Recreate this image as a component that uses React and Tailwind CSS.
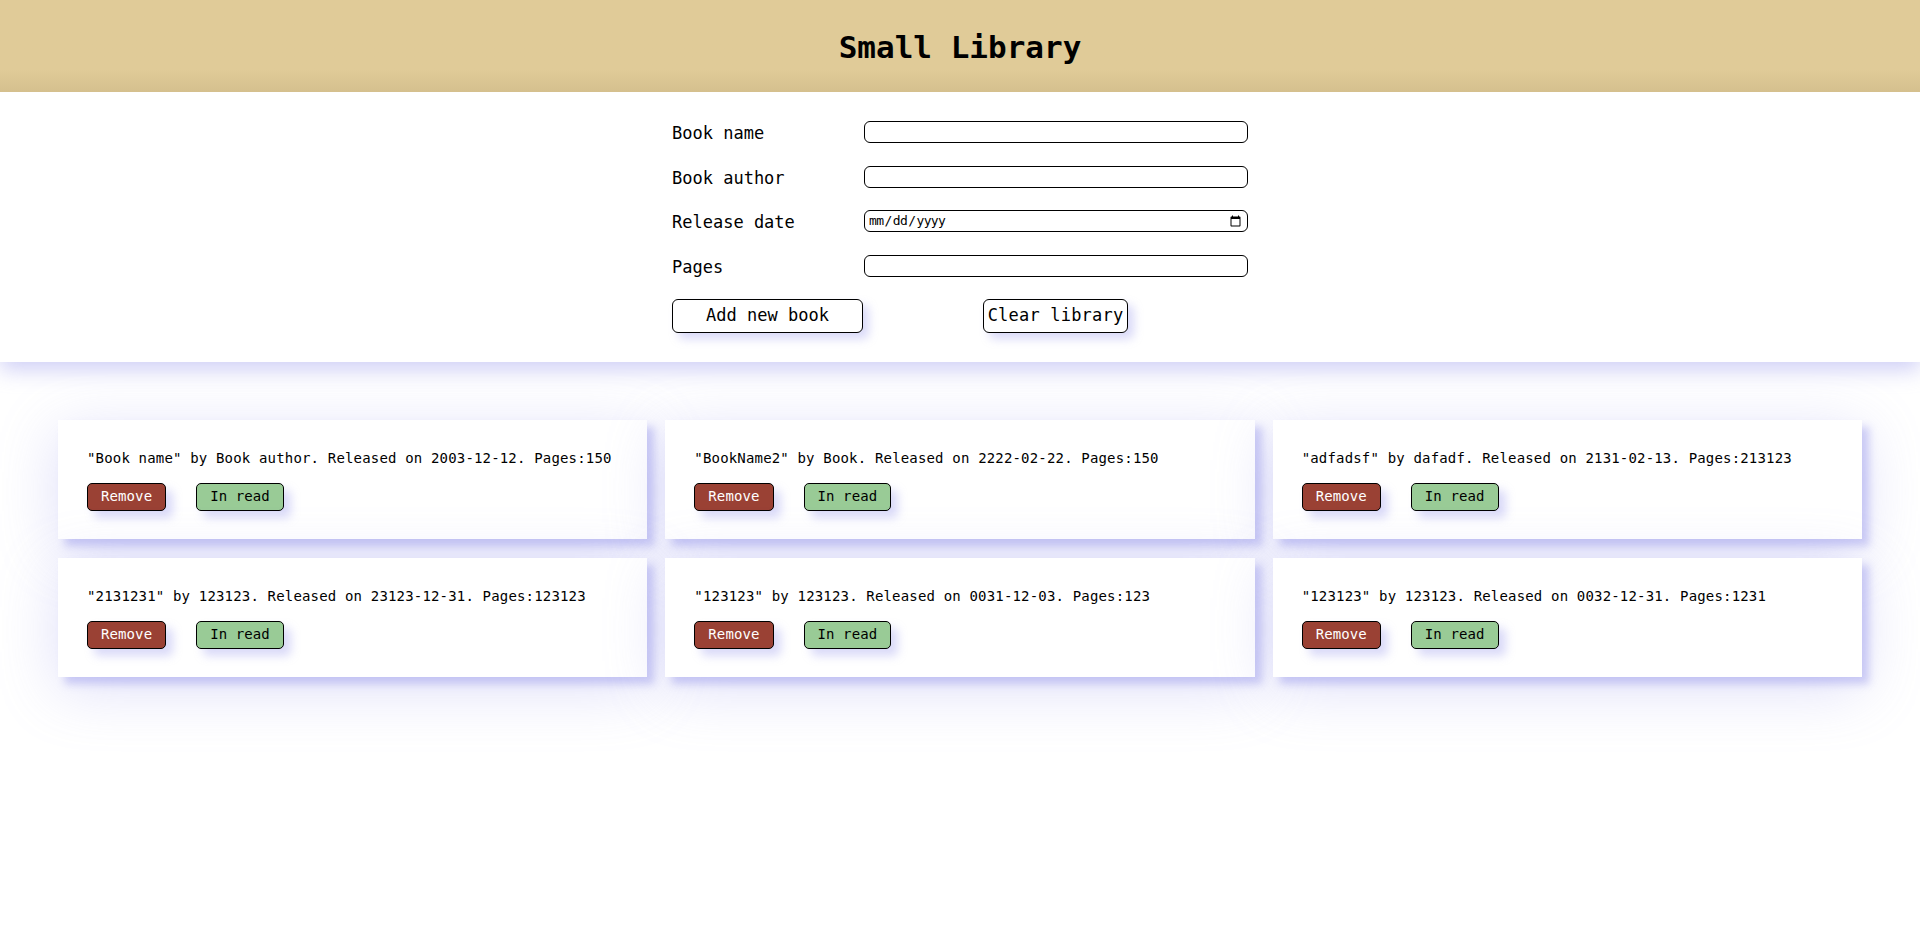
import React, { useState } from "react";

const initialBooks = [
  { id: 1, name: "Book name", author: "Book author", date: "2003-12-12", pages: "150" },
  { id: 2, name: "BookName2", author: "Book", date: "2222-02-22", pages: "150" },
  { id: 3, name: "adfadsf", author: "dafadf", date: "2131-02-13", pages: "213123" },
  { id: 4, name: "2131231", author: "123123", date: "23123-12-31", pages: "123123" },
  { id: 5, name: "123123", author: "123123", date: "0031-12-03", pages: "123" },
  { id: 6, name: "123123", author: "123123", date: "0032-12-31", pages: "1231" },
];

const mono = "font-['DejaVu_Sans_Mono','Liberation_Mono',monospace]";

export default function App() {
  const [books, setBooks] = useState(initialBooks);
  const [form, setForm] = useState({ name: "", author: "", date: "", pages: "" });

  const update = (key) => (e) => setForm({ ...form, [key]: e.target.value });

  const addBook = () => {
    if (!form.name) return;
    setBooks([...books, { ...form, id: Date.now() }]);
    setForm({ name: "", author: "", date: "", pages: "" });
  };

  const fields = [
    { key: "name", label: "Book name", type: "text" },
    { key: "author", label: "Book author", type: "text" },
    { key: "date", label: "Release date", type: "date" },
    { key: "pages", label: "Pages", type: "text" },
  ];

  return (
    <div className={`min-h-[934px] bg-white text-black ${mono}`}>
      <header className="h-[92px] flex items-center justify-center bg-gradient-to-b from-[#e0cb98] from-75% to-[#d5c08e] relative z-20">
        <h1 className="text-[31px] font-bold leading-none mt-[2px]">Small Library</h1>
      </header>

      <section className="relative z-10 bg-white pt-[29px] pb-[29px] shadow-[0_8px_20px_rgba(150,150,235,0.45)]">
        <div className="w-[576px] mx-auto">
          <div className="grid grid-cols-[192px_384px] gap-y-[22.5px] items-center">
            {fields.map((f) => (
              <React.Fragment key={f.key}>
                <label className="text-[17px] leading-[22px] translate-y-[1px]">{f.label}</label>
                <input
                  type={f.type}
                  value={form[f.key]}
                  onChange={update(f.key)}
                  className={`h-[22px] w-full border border-black rounded-[6px] px-[3px] text-[13px] tracking-[-0.6px] bg-white outline-none ${mono}`}
                />
              </React.Fragment>
            ))}
          </div>
          <div className="flex gap-[120px] mt-[22px]">
            <button
              onClick={addBook}
              className="w-[191px] h-[34px] border border-black rounded-[6px] bg-white text-[17px] shadow-[6px_6px_10px_rgba(150,150,235,0.35)]"
            >
              Add new book
            </button>
            <button
              onClick={() => setBooks([])}
              className="w-[145px] h-[34px] border border-black rounded-[6px] bg-white text-[17px] tracking-[0.2px] shadow-[6px_6px_10px_rgba(150,150,235,0.35)]"
            >
              Clear library
            </button>
          </div>
        </div>
      </section>

      <main className="px-[58px] pt-[58px] pb-[60px]">
        <div className="grid grid-cols-3 gap-x-[18px] gap-y-[19px]">
          {books.map((book) => (
            <div
              key={book.id}
              className="bg-white px-[29px] pt-[28px] pb-[28px] shadow-[7px_7px_8px_rgba(150,150,235,0.45),0_12px_60px_rgba(150,150,235,0.3)]"
            >
              <p className="text-[14px] leading-[20px] tracking-[0.17px]">
                "{book.name}" by {book.author}. Released on {book.date}. Pages:{book.pages}
              </p>
              <div className="flex gap-[30px] mt-[15px]">
                <button
                  onClick={() => setBooks(books.filter((b) => b.id !== book.id))}
                  className="h-[28px] px-[13px] border border-black rounded-[5px] bg-[#9a4134] text-white text-[14px] tracking-[0.1px] shadow-[7px_7px_10px_rgba(150,150,235,0.35)]"
                >
                  Remove
                </button>
                <button className="h-[28px] px-[13px] border border-black rounded-[5px] bg-[#99cb96] text-black text-[14px] tracking-[0.1px] shadow-[7px_7px_10px_rgba(150,150,235,0.35)]">
                  In read
                </button>
              </div>
            </div>
          ))}
        </div>
      </main>
    </div>
  );
}
